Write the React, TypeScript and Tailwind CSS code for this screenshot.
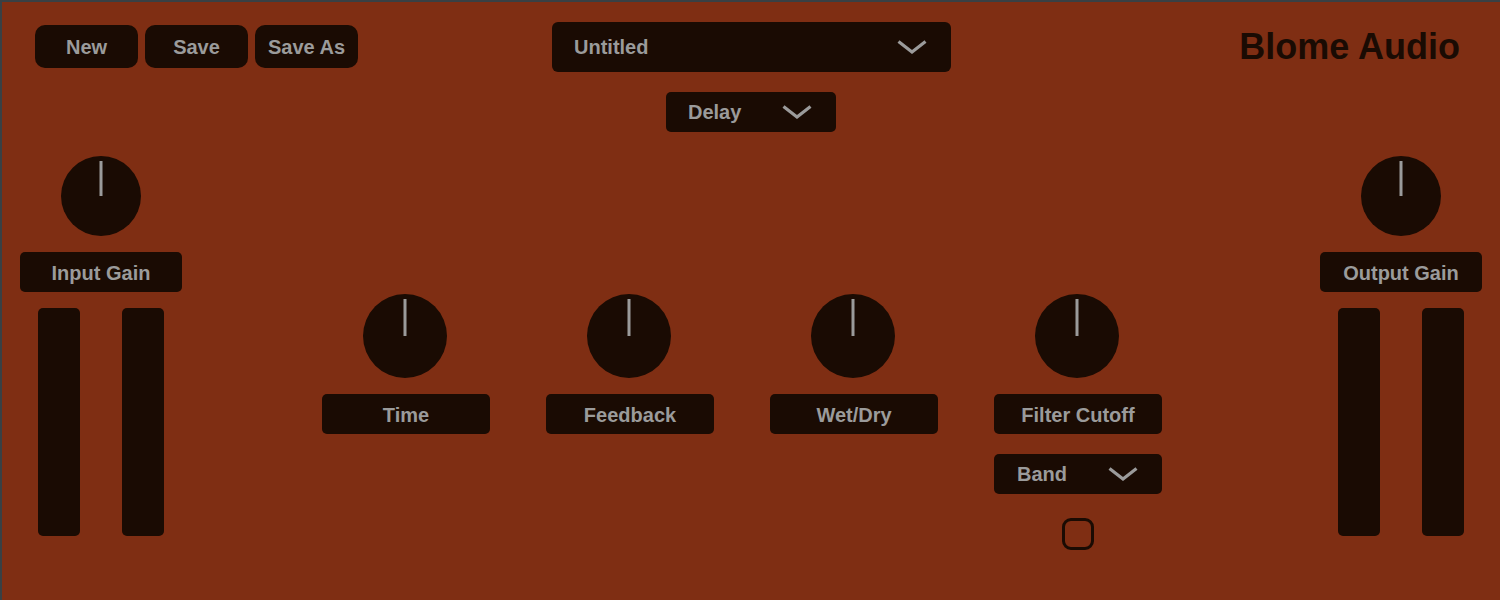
import React from "react";

const DARK = "bg-[#1a0b03]";

function Chevron() {
  return (
    <svg width="30" height="14" viewBox="0 0 30 14" fill="none">
      <polyline points="1.5,1.5 15,12 28.5,1.5" stroke="#9b9b9b" strokeWidth="3.2" />
    </svg>
  );
}

function Knob({ size, lineTop, lineH, shift = "" }: { size: string; lineTop: string; lineH: string; shift?: string }) {
  return (
    <div className={`relative rounded-full ${DARK} ${size} ${shift}`}>
      <div className={`absolute left-1/2 -translate-x-1/2 w-[3px] bg-[#9b9b9b] ${lineTop} ${lineH}`} />
    </div>
  );
}

function Label({ text }: { text: string }) {
  return (
    <div className={`mt-[16px] h-[40px] w-full rounded-[5px] ${DARK} flex items-center justify-center pt-[1px] text-[20px] text-[#9b9b9b]`}>
      {text}
    </div>
  );
}

function GainColumn({ title }: { title: string }) {
  return (
    <div className="w-[162px] flex flex-col items-center">
      <Knob size="w-[80px] h-[80px]" lineTop="top-[5px]" lineH="h-[35px]" />
      <Label text={title} />
      <div className="mt-[16px] flex gap-[42px]">
        <div className={`w-[42px] h-[228px] rounded-[5px] ${DARK}`} />
        <div className={`w-[42px] h-[228px] rounded-[5px] ${DARK}`} />
      </div>
    </div>
  );
}

function ParamColumn({ title, children }: { title: string; children?: React.ReactNode }) {
  return (
    <div className="w-[168px] flex flex-col items-center">
      <Knob size="w-[84px] h-[84px]" lineTop="top-[5px]" lineH="h-[37px]" shift="mr-[3px]" />
      <Label text={title} />
      {children}
    </div>
  );
}

export default function App() {
  const buttons = ["New", "Save", "Save As"];

  return (
    <div className="w-[1500px] h-[600px] overflow-hidden bg-[#7f2e13] border-t-2 border-l-2 border-[#394044] font-['Liberation_Sans',Arial,sans-serif] font-bold text-[#9b9b9b]">
      <div className="grid grid-cols-[1fr_400px_1fr] items-start">
        <div className="pl-[33px] pt-[23px] flex gap-[7px]">
          {buttons.map((b) => (
            <button
              key={b}
              className={`w-[103px] h-[43px] rounded-[10px] ${DARK} pt-[1px] text-[20px] flex items-center justify-center`}
            >
              {b}
            </button>
          ))}
        </div>
        <div className={`mt-[20px] ml-[1px] h-[50px] rounded-[6px] ${DARK} flex items-center justify-between pl-[22px] pr-[24px] text-[20px]`}>
          <span>Untitled</span>
          <Chevron />
        </div>
        <div className="flex justify-end pr-[40px] pt-[27px] text-[36px] leading-none text-[#1a0b03]">
          Blome Audio
        </div>
      </div>

      <div className="mt-[20px] flex justify-center">
        <div className={`w-[170px] h-[40px] rounded-[5px] ${DARK} flex items-center justify-between pl-[22px] pr-[24px] text-[20px]`}>
          <span>Delay</span>
          <Chevron />
        </div>
      </div>

      <div className="mt-[24px] flex items-start">
        <div className="ml-[18px]">
          <GainColumn title="Input Gain" />
        </div>

        <div className="ml-[140px] mt-[138px] flex gap-[56px]">
          <ParamColumn title="Time" />
          <ParamColumn title="Feedback" />
          <ParamColumn title="Wet/Dry" />
          <ParamColumn title="Filter Cutoff">
            <div className={`mt-[20px] h-[40px] w-full rounded-[5px] ${DARK} flex items-center justify-between pl-[23px] pr-[24px] text-[20px]`}>
              <span>Band</span>
              <Chevron />
            </div>
            <div className="mt-[24px] w-[32px] h-[32px] rounded-[9px] border-[3px] border-[#1a0b03]" />
          </ParamColumn>
        </div>

        <div className="ml-[158px]">
          <GainColumn title="Output Gain" />
        </div>
      </div>
    </div>
  );
}
